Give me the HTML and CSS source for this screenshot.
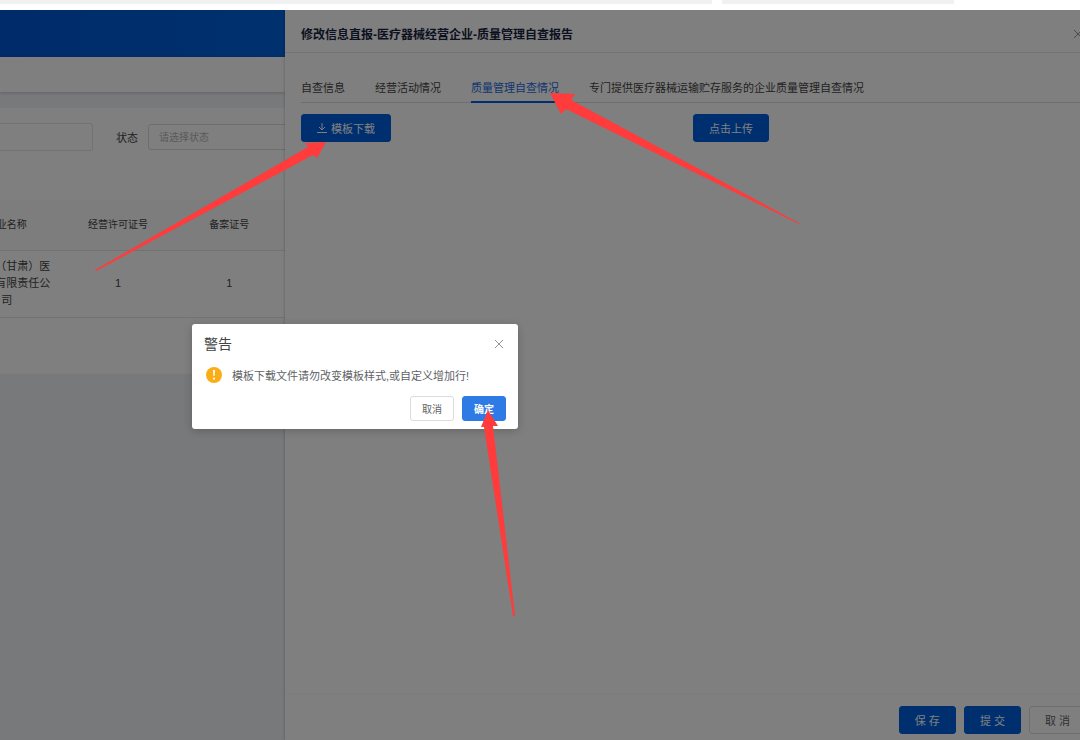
FILE: index.html
```html
<!DOCTYPE html>
<html lang="zh-CN">
<head>
    <meta charset="UTF-8">
    <meta name="viewport" content="width=device-width, initial-scale=1.0">
    <title>质量管理自查报告</title>
    <link rel="stylesheet" href="styles.css">
</head>
<body>
    <div class="top-strip">
        <div class="strip-bar wide"></div>
        <div class="strip-bar"></div>
    </div>

    <div class="app">
        <main class="page">
            <div class="banner"></div>
            <div class="nav-bar"></div>
            <div class="panel">
                <form class="filters">
                    <input class="text-input" type="text" aria-label="企业名称">
                    <label for="status">状态</label>
                    <select id="status" class="status-select">
                        <option>请选择状态</option>
                    </select>
                </form>
                <table class="records">
                    <thead>
                        <tr>
                            <th>企业名称</th>
                            <th>经营许可证号</th>
                            <th>备案证号</th>
                        </tr>
                    </thead>
                    <tbody>
                        <tr>
                            <td><span class="company">（甘肃）医<br>有限责任公</span>司</td>
                            <td>1</td>
                            <td>1</td>
                        </tr>
                    </tbody>
                </table>
            </div>
        </main>

        <section class="drawer">
            <header class="drawer-header">
                <h1>修改信息直报-医疗器械经营企业-质量管理自查报告</h1>
                <button class="close" type="button" aria-label="关闭">
                    <svg width="10" height="10" viewBox="0 0 10 10"><path d="M1 1l8 8M9 1l-8 8"/></svg>
                </button>
            </header>
            <div class="drawer-body">
                <nav class="tabs">
                    <a href="#">自查信息</a>
                    <a href="#">经营活动情况</a>
                    <a href="#" class="active">质量管理自查情况</a>
                    <a href="#">专门提供医疗器械运输贮存服务的企业质量管理自查情况</a>
                </nav>
                <div class="actions">
                    <div>
                        <button class="btn primary" type="button">
                            <svg width="10" height="10" viewBox="0 0 10 10"><path d="M5 0v7M2 4l3 3l3-3M0 9.5h10"/></svg>
                            模板下载
                        </button>
                    </div>
                    <div>
                        <button class="btn primary" type="button">点击上传</button>
                    </div>
                </div>
            </div>
            <footer class="drawer-footer">
                <button class="btn primary" type="button">保 存</button>
                <button class="btn primary" type="button">提 交</button>
                <button class="btn" type="button">取 消</button>
            </footer>
        </section>

        <div class="mask"></div>
    </div>

    <div class="dialog" role="dialog" aria-labelledby="dialog-title">
        <div class="dialog-header">
            <h2 id="dialog-title">警告</h2>
            <button class="close" type="button" aria-label="关闭">
                <svg width="10" height="10" viewBox="0 0 10 10"><path d="M1 1l8 8M9 1l-8 8"/></svg>
            </button>
        </div>
        <div class="dialog-body">
            <svg width="16" height="16" viewBox="0 0 16 16">
                <circle cx="8" cy="8" r="8" fill="#faad14"/>
                <path d="M7 3h2l-.4 6h-1.2z" fill="#fff"/>
                <circle cx="8" cy="11.7" r="1.1" fill="#fff"/>
            </svg>
            <p>模板下载文件请勿改变模板样式,或自定义增加行!</p>
        </div>
        <div class="dialog-footer">
            <button class="btn small" type="button">取消</button>
            <button class="btn small confirm" type="button">确定</button>
        </div>
    </div>

    <svg class="arrows" width="1080" height="740" viewBox="0 0 1080 740">
        <path d="M95 270L308 147L305 143L326 142L317 158L313 155L96 271Z"/>
        <path d="M799 224L566 109L561 114L550 93L575 94L571 100L799 223Z"/>
        <path d="M513 616L484 427L481 427L488 410L498 426L493 426L515 616Z"/>
    </svg>
</body>
</html>
```

FILE: styles.css
```css
* {
    box-sizing: border-box;
}

body {
    margin: 0;
    height: 100vh;
    display: flex;
    flex-direction: column;
    overflow: hidden;
    position: relative;
    font-family: "Liberation Sans", "Noto Sans CJK SC", sans-serif;
    font-size: 11px;
    color: #444;
    background-color: #fff;
}

h1, h2, p {
    margin: 0;
}

button, input, select {
    font-family: inherit;
}

.top-strip {
    height: 10px;
    display: flex;
    gap: 10px;
    flex-shrink: 0;
}

.strip-bar {
    width: 232px;
    height: 4px;
    background-color: #f1f1f1;
}

.strip-bar.wide {
    width: 712px;
}

.app {
    flex: 1;
    display: flex;
    position: relative;
    overflow: hidden;
}

.mask {
    position: absolute;
    inset: 0;
    background-color: rgba(0, 0, 0, 0.5);
}

/* list page behind the drawer */
.page {
    width: 285px;
    flex-shrink: 0;
    overflow: hidden;
    background-color: #f0f2f5;
}

.banner {
    height: 47px;
    background: linear-gradient(90deg, #0056d6, #0062de);
}

.nav-bar {
    height: 35px;
    margin-bottom: 16px;
    background-color: #fff;
    box-shadow: 0 1px 3px rgba(0, 21, 41, 0.2);
}

.panel {
    height: 266px;
    padding-top: 15px;
    background-color: #fff;
}

.filters {
    display: flex;
    align-items: center;
    width: 400px;
    margin-bottom: 49px;
}

.filters label {
    margin: 0 10px 0 23px;
}

.text-input {
    width: 93px;
    height: 28px;
    border: 1px solid #e4e4e4;
    border-left: none;
    border-radius: 0 3px 3px 0;
}

.status-select {
    width: 180px;
    height: 26px;
    padding: 0 10px;
    border: 1px solid #dcdcdc;
    border-radius: 3px;
    background-color: #fff;
    color: #b4b4b4;
    font-size: 10px;
    appearance: none;
}

/* the table is scrolled sideways, its first column is partly hidden */
.records {
    width: 334px;
    margin-left: -49px;
    table-layout: fixed;
    border-collapse: collapse;
    line-height: 17px;
    text-align: center;
}

.records th {
    height: 50px;
    padding: 0;
    font-size: 10px;
    font-weight: normal;
    background-color: #fafafa;
    border-bottom: 1px solid #e4e4e4;
}

.records td {
    height: 67px;
    padding: 0;
    border-bottom: 1px solid #e4e4e4;
}

.company {
    display: block;
    padding-right: 12px;
    text-align: right;
}

/* drawer */
.drawer {
    flex: 1;
    margin-right: -21px;
    display: flex;
    flex-direction: column;
    background-color: #fff;
    box-shadow: -1px 0 2px rgba(0, 0, 0, 0.15);
}

.drawer-header {
    height: 43px;
    padding: 5px 18px 0 16px;
    display: flex;
    align-items: center;
    justify-content: space-between;
    border-bottom: 1px solid #e8e8e8;
}

.drawer-header h1 {
    font-size: 12px;
    color: #17233d;
}

.close {
    padding: 0;
    border: none;
    background: none;
    display: flex;
    cursor: pointer;
}

.close svg,
.btn svg {
    fill: none;
    stroke: currentColor;
}

.close svg {
    color: #909399;
}

.drawer-body {
    flex: 1;
    padding: 20px 16px;
}

.tabs {
    display: flex;
    gap: 30px;
    border-bottom: 1px solid #dcdcdc;
    margin-bottom: 11px;
}

.tabs a {
    height: 30px;
    line-height: 30px;
    margin-bottom: -1px;
    color: #444;
    text-decoration: none;
    white-space: nowrap;
}

.tabs .active {
    color: #1a6be0;
    border-bottom: 2px solid #005fe0;
}

.actions {
    display: grid;
    grid-template-columns: 1fr 1fr;
}

.btn {
    height: 28px;
    padding: 0 15px;
    border: 1px solid #dcdcdc;
    border-radius: 3px;
    background-color: #fff;
    color: #606266;
    font-size: 11px;
    display: flex;
    align-items: center;
    gap: 4px;
    cursor: pointer;
}

.btn.primary {
    background-color: #005fe0;
    border-color: #005fe0;
    color: #fff;
}

.btn.small {
    height: 25px;
    padding: 0 11px;
    font-size: 10px;
}

.btn.confirm {
    background-color: #2f7be5;
    border-color: #2f7be5;
    color: #fff;
    font-weight: bold;
}

.drawer-footer {
    display: flex;
    justify-content: flex-end;
    gap: 8px;
    padding: 12px 15px 6px;
    border-top: 1px solid #f8f8f8;
}

/* warning dialog */
.dialog {
    position: absolute;
    left: 192px;
    top: 324px;
    width: 326px;
    padding: 10px 12px 8px;
    border-radius: 3px;
    background-color: #fff;
    box-shadow: 0 2px 8px rgba(0, 0, 0, 0.2);
}

.dialog-header {
    display: flex;
    align-items: center;
    justify-content: space-between;
    padding-right: 2px;
}

.dialog-header h2 {
    font-size: 14px;
    font-weight: normal;
    line-height: 20px;
}

.dialog-body {
    display: flex;
    align-items: center;
    gap: 10px;
    padding: 13px 2px;
    color: #606266;
}

.dialog-footer {
    display: flex;
    justify-content: flex-end;
    gap: 8px;
}

.arrows {
    position: absolute;
    left: 0;
    top: 0;
    fill: #ff3b3b;
    pointer-events: none;
}
```
